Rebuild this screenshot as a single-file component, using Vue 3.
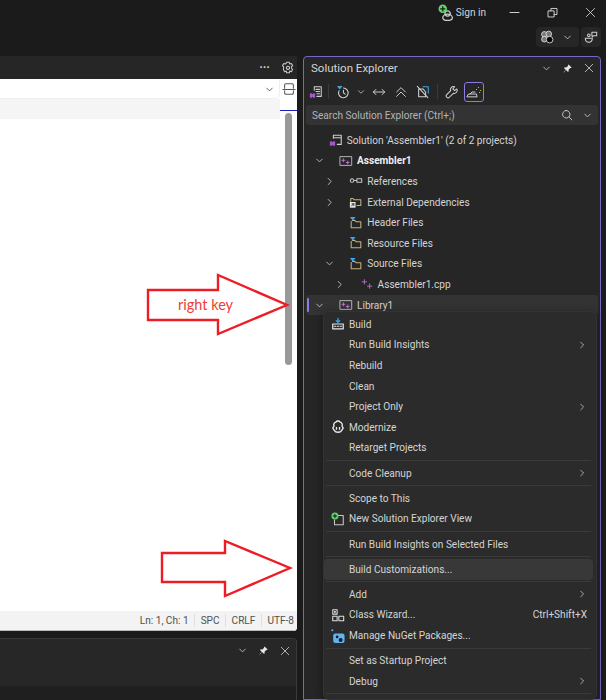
<script setup>
const S = '#d0d0d0'
const line = (d, c = S, w = 1.2) => `<path d="${d}" fill="none" stroke="${c}" stroke-width="${w}" stroke-linecap="round" stroke-linejoin="round"/>`
const fill = (d, c = S) => `<path d="${d}" fill="${c}"/>`
const filterMark = fill('M1 1h6.5L4.2 5z', '#3ea6f0')
const folder = line('M2.5 6v7.5h11V6.5H8L6.5 5H4', '#c8b27c')
const sparks = line('M5 3v5M2.5 5.5h5M11 8v5M8.5 10.5h5', '#b16bc4', 1.1)
const vs = fill('M1 10l1.5-1L4 10.5 5.5 9 7 10v4l-1.5 1L4 13.5 2.5 15 1 14z', '#a855d0')

const icons = {
  down: line('M4 6l4 4 4-4'),
  right: line('M6 3.5l4.5 4.5L6 12.5'),
  close: line('M3 3l10 10M13 3L3 13', S, 1.1),
  min: line('M2.5 8h11', S, 1.3),
  restore: line('M3 6h7v7.5H3zM6 6V3h7.5v7.5H10'),
  pin: fill('M9.5 2L14 6.5l-1 .8-1-.2-2.5 2.6.2 2.3-1 1L6 10.3l-3.4 3.4-.5-.4L5.5 10 3 7.3l1-1 2.4.2L9 4l-.3-1z', '#e8e8e8'),
  user: line('M9 6.5a2.5 2.5 0 1 0 .1 0zM4.5 13c0-2 2-3.5 4.5-3.5s4.5 1.5 4.5 3.5-2 2.5-4.5 2.5-4.5-.5-4.5-2.5z') +
    '<circle cx="4.5" cy="4.5" r="4" fill="#5fd86a"/>' + line('M2.5 4.5h4M4.5 2.5v4', '#1b1b1b', 1.2),
  copilot: '<circle cx="5" cy="5" r="3.2" fill="#777" stroke="#ddd"/><circle cx="10" cy="4.5" r="3.2" fill="#777" stroke="#ddd"/><circle cx="5" cy="10.5" r="3.2" fill="#777" stroke="#ddd"/><circle cx="11" cy="11" r="3.8" fill="#050505" stroke="#ddd"/>',
  feedback: line('M1.5 9.5h8c0 3-1.5 4.5-4 4.5s-4-1.5-4-4.5zM5.5 4.5a1.5 1.5 0 1 0 .01 0zM9 2.5h5.5v4H11L9.5 8V6.5H9z'),
  gear: line('M6.5 1.5h3l.5 2 1.8-.7 1.5 2.5-1.4 1.5.1 1.4 1.3 1.5-1.5 2.5-1.8-.7-.5 2h-3l-.5-2-1.8.7-1.5-2.5L3 8.2V6.8L1.7 5.3l1.5-2.5 1.8.7z', '#c8c8c8') + line('M8 6a1.8 1.8 0 1 0 .01 0z', '#c8c8c8'),
  split: line('M3 7V3.5Q3 2 4.5 2h7Q13 2 13 3.5V7M3 10v2.5Q3 14 4.5 14h7q1.5 0 1.5-1.5V10M1 8.5h14', '#555', 1.2),
  solutionTool: line('M6 6V2h8v11H9M8 5h4M8 7.5h4M9 10h3') + vs,
  history: filterMark + line('M8.5 3.5a5.5 5.5 0 1 1-5 3M8.5 6v3l2 1.5'),
  sync: line('M1.5 8h13M4.5 5l-3 3 3 3M11.5 5l3 3-3 3', S, 1.1),
  collapse: line('M3 8l5-5 5 5M3 13l5-5 5 5', S, 1.1),
  nofiles: line('M3 4.5v9h8V8l-3-3.5z') + line('M8 2h6v7', '#3ea6f0') + line('M1.5 1.5l12 13'),
  wrench: line('M13.5 4.5l-2.5 2-2-2 2-2.5a3.5 3.5 0 0 0-4.5 4.5L2 11a1.8 1.8 0 0 0 3 3l4.5-4.5a3.5 3.5 0 0 0 4-5z'),
  brush: line('M1 12.5l1.5-2.5h8l.5 2.5zM4 10l2-2h3', S, 1) + fill('M12 3h1v1h-1zM14 6h1v1h-1zM10 5h1v1h-1zM13 8h1v1h-1z', '#e0b050'),
  search: line('M7 2a5 5 0 1 0 .01 0zM10.5 10.5L14.5 14.5'),
  solution: line('M5 6V2.5h9V13H9.5M5 5.5h9') + vs,
  project: line('M1.5 3h13v10h-13z', '#b8b8b8', 1.1) + line('M5 5.5v3.5M3.3 7.2h3.4M10 8v3.5M8.3 9.7h3.4', '#c273d8', 1.1),
  references: line('M3.5 5.5a2 2 0 1 0 .01 0zM5.5 7.5h3M9 5.5h5.5v4H9z', '#c8c8c8'),
  external: line('M2 7V4h2.5L6 5.5h7.5V12H9', '#c8b27c') + fill('M1 8h6.5v6.5H1z', '#e8e8e8') + line('M3 12.5L5.5 10M3.5 10h2v2', '#222', 1),
  filter: folder + filterMark,
  cpp: sparks,
  build: line('M2 8h12v5.5H2z', '#e8e8e8', 1.4) + line('M4 10.5h1.5M7.3 10.5h1.5M10.5 10.5H12', '#e8e8e8', 1.2) + line('M8 1.5V6M6 4.2L8 6.2l2-2', '#3ea6f0', 1.4),
  modernize: line('M5.5 2.5a3 3 0 0 1 5 0 3 3 0 0 1 2 4.5l1.5 2-1.5 2.5Q11 14 8 14t-4.5-2.5L2 9l1.5-2a3 3 0 0 1 2-4.5z', '#eee', 1.5) + fill('M5.5 8H7v3H5.5zM9 8h1.5v3H9z', '#eee'),
  newview: line('M6 4h8v10.5H4V9', '#c8c8c8') + '<circle cx="4.5" cy="4.5" r="4" fill="#5fd86a"/>' + line('M2.5 4.5h4M4.5 2.5v4', '#1b1b1b', 1.2),
  wizard: line('M2 2h5v5H2zM2 9.5h5v5H2zM9 9.5h5.5v5H9z', '#e0e0e0', 1.2) + fill('M3.5 3.5h2v2h-2z', '#e0e0e0'),
  nuget: fill('M5 5h8a2.5 2.5 0 0 1 2.5 2.5v6A2.5 2.5 0 0 1 13 16H5a2.5 2.5 0 0 1-2.5-2.5v-6A2.5 2.5 0 0 1 5 5z', '#5fb4f2') + '<circle cx="1.5" cy="1.5" r="1.2" fill="#5fb4f2"/><circle cx="7" cy="9" r="1.5" fill="#1b1b1b"/><circle cx="11" cy="12.5" r="2.3" fill="#1b1b1b"/>',
}

const toolbar = [
  { icon: 'solutionTool', cls: 'first' },
  { sep: true },
  { icon: 'history', cls: 'hist' },
  { icon: 'down', w: 10, cls: 'small' },
  { icon: 'sync' },
  { icon: 'collapse' },
  { icon: 'nofiles' },
  { sep: true },
  { icon: 'wrench' },
  { icon: 'brush', w: 16, cls: 'active' },
]

const tree = [
  { level: 0, icon: 'solution', label: "Solution 'Assembler1' (2 of 2 projects)" },
  { level: 1, icon: 'project', label: 'Assembler1', open: true, bold: true },
  { level: 2, icon: 'references', label: 'References', closed: true },
  { level: 2, icon: 'external', label: 'External Dependencies', closed: true },
  { level: 2, icon: 'filter', label: 'Header Files' },
  { level: 2, icon: 'filter', label: 'Resource Files' },
  { level: 2, icon: 'filter', label: 'Source Files', open: true },
  { level: 3, icon: 'cpp', label: 'Assembler1.cpp', closed: true },
  { level: 1, icon: 'project', label: 'Library1', open: true, selected: true },
]

const menu = [
  { label: 'Build', icon: 'build' },
  { label: 'Run Build Insights', sub: true },
  { label: 'Rebuild' },
  { label: 'Clean' },
  { label: 'Project Only', sub: true },
  { label: 'Modernize', icon: 'modernize' },
  { label: 'Retarget Projects' },
  { sep: true },
  { label: 'Code Cleanup', sub: true },
  { sep: true },
  { label: 'Scope to This' },
  { label: 'New Solution Explorer View', icon: 'newview' },
  { sep: true },
  { label: 'Run Build Insights on Selected Files' },
  { sep: true },
  { label: 'Build Customizations...', hover: true },
  { sep: true },
  { label: 'Add', sub: true },
  { label: 'Class Wizard...', icon: 'wizard', keys: 'Ctrl+Shift+X' },
  { label: 'Manage NuGet Packages...', icon: 'nuget' },
  { sep: true },
  { label: 'Set as Startup Project' },
  { label: 'Debug', sub: true },
  { sep: true },
]

const status = ['Ln: 1, Ch: 1', 'SPC', 'CRLF', 'UTF-8']
</script>

<template>
  <div class="app">
    <header class="titlebar">
      <div class="signin">
        <svg class="ico16" viewBox="0 0 16 16" v-html="icons.user"></svg>
        <span>Sign in</span>
      </div>
      <svg class="win" viewBox="0 0 16 16" v-html="icons.min"></svg>
      <svg class="win" viewBox="0 0 16 16" v-html="icons.restore"></svg>
      <svg class="win" viewBox="0 0 16 16" v-html="icons.close"></svg>
    </header>

    <div class="actions">
      <div class="action-group">
        <svg class="ico14" viewBox="0 0 16 16" v-html="icons.copilot"></svg>
        <svg class="ico11" viewBox="0 0 16 16" v-html="icons.down"></svg>
      </div>
      <div class="action-btn">
        <svg class="ico14" viewBox="0 0 16 16" v-html="icons.feedback"></svg>
      </div>
    </div>

    <main class="workspace">
      <section class="left">
        <div class="tabstrip">
          <span class="dots">···</span>
          <svg class="ico14" viewBox="0 0 16 16" v-html="icons.gear"></svg>
        </div>
        <div class="editor">
          <div class="nav">
            <div class="nav-main">
              <div class="nav-input">
                <svg class="ico11" viewBox="0 0 16 16" v-html="icons.down.replaceAll('#d0d0d0', '#444')"></svg>
              </div>
              <div class="nav-band"></div>
            </div>
            <div class="nav-side">
              <svg class="ico14" viewBox="0 0 16 16" v-html="icons.split"></svg>
              <div class="mark"></div>
            </div>
          </div>
          <div class="code">
            <div class="scrollbar"></div>
          </div>
          <div class="statusbar">
            <span v-for="s in status" :key="s" class="status-item">{{ s }}</span>
          </div>
        </div>
        <div class="output">
          <div class="output-head">
            <svg class="ico11" viewBox="0 0 16 16" v-html="icons.down"></svg>
            <svg class="ico11" viewBox="0 0 16 16" v-html="icons.pin"></svg>
            <svg class="ico12" viewBox="0 0 16 16" v-html="icons.close"></svg>
          </div>
          <div class="output-body"></div>
        </div>
      </section>

      <aside class="explorer">
        <div class="ex-title">
          <span>Solution Explorer</span>
          <div class="ex-controls">
            <svg class="ico11" viewBox="0 0 16 16" v-html="icons.down"></svg>
            <svg class="ico11" viewBox="0 0 16 16" v-html="icons.pin"></svg>
            <svg class="ico12" viewBox="0 0 16 16" v-html="icons.close"></svg>
          </div>
        </div>
        <div class="ex-toolbar">
          <template v-for="(t, i) in toolbar" :key="i">
            <span v-if="t.sep" class="tb-sep"></span>
            <span v-else class="tb-btn" :class="t.cls">
              <svg :width="t.w || 14" :height="t.w || 14" viewBox="0 0 16 16" v-html="icons[t.icon]"></svg>
            </span>
          </template>
        </div>
        <div class="ex-search">
          <span>Search Solution Explorer (Ctrl+;)</span>
          <svg class="ico12 mag" viewBox="0 0 16 16" v-html="icons.search"></svg>
          <svg class="ico11" viewBox="0 0 16 16" v-html="icons.down"></svg>
        </div>
        <ul class="tree">
          <li
            v-for="row in tree"
            :key="row.label"
            class="tree-row"
            :class="{ selected: row.selected, bold: row.bold }"
          >
            <span class="tree-chev" :style="{ marginLeft: (row.level - 1) * 10.3 + 'px' }">
              <svg v-if="row.open || row.closed" class="ico11" viewBox="0 0 16 16" v-html="row.open ? icons.down : icons.right"></svg>
            </span>
            <span class="tree-icon">
              <svg class="ico14" viewBox="0 0 16 16" v-html="icons[row.icon]"></svg>
            </span>
            <span>{{ row.label }}</span>
          </li>
        </ul>
      </aside>
    </main>

    <div class="menu">
      <template v-for="(m, i) in menu" :key="i">
        <div v-if="m.sep" class="menu-sep"></div>
        <div v-else class="menu-item" :class="{ hover: m.hover }">
          <span class="menu-icon">
            <svg v-if="m.icon" class="ico14" viewBox="0 0 16 16" v-html="icons[m.icon]"></svg>
          </span>
          <span class="menu-label">{{ m.label }}</span>
          <span v-if="m.keys" class="menu-keys">{{ m.keys }}</span>
          <svg v-if="m.sub" class="ico10" viewBox="0 0 16 16" v-html="icons.right"></svg>
        </div>
      </template>
    </div>

    <svg class="arrows" viewBox="0 0 606 700">
      <polygon points="148,290 218,290 218,275 287,305 218,334 218,320 148,320" />
      <polygon points="162,553 225,553 225,541 290,568 225,596 225,582 162,582" />
    </svg>
    <span class="arrow-label">right key</span>
  </div>
</template>

<style>
html, body {
  margin: 0;
  background: #1b1b1b;
}
</style>

<style scoped>
.app {
  position: relative;
  width: 606px;
  height: 700px;
  overflow: hidden;
  background: #1b1b1b;
  color: #d4d4d4;
  font-family: Roboto, "Noto Sans", sans-serif;
  font-size: 10.1px;
}
svg { display: block; flex: none; }
.ico16 { width: 17px; height: 17px; }
.ico14 { width: 14px; height: 14px; }
.ico12 { width: 12px; height: 12px; }
.ico11 { width: 11px; height: 11px; }
.ico10 { width: 10px; height: 10px; }

.titlebar {
  height: 24px;
  display: flex;
  align-items: center;
  justify-content: flex-end;
  padding-right: 9px;
}
.signin {
  display: flex;
  align-items: center;
  margin-right: 22px;
}
.signin span { margin-left: 1px; }
.win {
  width: 13px;
  height: 13px;
  margin-left: 25px;
}
.signin + .win { margin-left: 0; }

.actions {
  height: 32px;
  display: flex;
  justify-content: flex-end;
  align-items: flex-start;
  gap: 2px;
  padding: 3px 5px 0 0;
  box-sizing: border-box;
}
.action-group, .action-btn {
  height: 20px;
  background: #262626;
  border-radius: 4px;
  display: flex;
  align-items: center;
}
.action-group {
  width: 43px;
  padding-left: 4px;
  gap: 8px;
  box-sizing: border-box;
}
.action-btn {
  width: 20px;
  justify-content: center;
}

.workspace {
  height: 644px;
  display: flex;
}
.left {
  width: 297px;
  display: flex;
  flex-direction: column;
  flex: none;
}
.tabstrip {
  height: 23px;
  background: #262626;
  display: flex;
  justify-content: flex-end;
  align-items: center;
  gap: 11px;
  padding-right: 2px;
}
.dots { color: #d0d0d0; font-weight: 700; font-size: 12px; }
.editor {
  height: 552px;
  background: #fff;
  border-radius: 0 0 4px 0;
  display: flex;
  flex-direction: column;
  overflow: hidden;
}
.nav { display: flex; height: 34px; flex: none; }
.nav-main { width: 280px; }
.nav-input {
  height: 18px;
  margin-top: 1px;
  border-radius: 0 0 4px 0;
  box-shadow: 0 1px 0 #efefef, 1px 0 0 #efefef;
  display: flex;
  align-items: center;
  justify-content: flex-end;
  padding-right: 4px;
  width: 279px;
  box-sizing: border-box;
}
.nav-band {
  height: 20px;
  margin-top: 1px;
  background: #f5f5f5;
}
.nav-side {
  width: 17px;
  display: flex;
  flex-direction: column;
  align-items: center;
  padding-top: 3px;
  box-sizing: border-box;
}
.mark {
  width: 17px;
  height: 1px;
  margin-top: 14px;
  background: #2222bb;
}
.code {
  flex: 1;
  display: flex;
  justify-content: flex-end;
  padding-right: 5px;
}
.scrollbar {
  width: 7px;
  height: 252px;
  background: #999;
  border-radius: 4px;
}
.statusbar {
  height: 20px;
  flex: none;
  background: #f3f3f3;
  border-bottom: 1px solid #bbb;
  box-sizing: border-box;
  display: flex;
  justify-content: flex-end;
  align-items: center;
  color: #505050;
  padding-right: 3px;
}
.status-item {
  padding: 0 5.5px;
  border-left: 1px solid #e0e0e0;
  line-height: 13px;
}
.status-item:first-child { border-left: 0; }
.status-item:last-child { padding-right: 0; }
.output {
  margin-top: 7px;
  flex: 1;
  background: #1f1f1f;
  border: 1px solid #3a3a3a;
  border-width: 1px 1px 0 0;
  border-radius: 0 4px 0 0;
  display: flex;
  flex-direction: column;
  overflow: hidden;
}
.output-head {
  height: 47px;
  flex: none;
  background: #272727;
  display: flex;
  justify-content: flex-end;
  gap: 10px;
  padding: 6px 5px 0 0;
  box-sizing: border-box;
}
.output-body { flex: 1; }

.explorer {
  width: 298px;
  margin-left: 6px;
  flex: none;
  background: #262626;
  border: 1.5px solid #7568c4;
  border-radius: 4px 4px 0 0;
  box-sizing: border-box;
  padding: 0 2px;
}
.ex-title {
  height: 22px;
  display: flex;
  align-items: center;
  justify-content: space-between;
  padding: 0 3px 0 5px;
  font-size: 11.5px;
}
.ex-controls {
  display: flex;
  align-items: center;
  gap: 10px;
}
.ex-toolbar {
  height: 25px;
  display: flex;
  align-items: center;
}
.tb-btn {
  width: 22px;
  height: 20px;
  display: flex;
  align-items: center;
  justify-content: center;
  box-sizing: border-box;
}
.tb-btn.first { width: 19px; }
.tb-btn.hist { width: 21px; }
.tb-btn.small { width: 15px; }
.tb-btn.active {
  width: 20px;
  border: 1.5px solid #8a7ce0;
  border-radius: 3px;
  margin-left: 1px;
}
.tb-sep {
  width: 1px;
  height: 15px;
  background: #3c3c3c;
  margin: 0 3px;
}
.ex-search {
  height: 20px;
  margin-top: 1px;
  background: #333;
  border-radius: 3px;
  display: flex;
  align-items: center;
  padding: 0 5px 0 6px;
  color: #b4b4b4;
}
.ex-search span { flex: 1; }
.mag { margin-right: 9px; }
.tree {
  list-style: none;
  margin: 5px 0 0;
  padding: 0;
}
.tree-row {
  height: 20.6px;
  display: flex;
  align-items: center;
  white-space: nowrap;
  border-radius: 3px;
  position: relative;
  padding-left: 4px;
  box-sizing: border-box;
}
.tree-row.bold { font-weight: 700; color: #efefef; }
.tree-row.selected { background: #333; }
.tree-row.selected::before {
  content: '';
  position: absolute;
  left: 1px;
  top: 3px;
  width: 2px;
  height: 14px;
  border-radius: 1px;
  background: #8a7ce0;
}
.tree-chev {
  width: 18px;
  display: flex;
  justify-content: center;
  flex: none;
}
.tree-icon {
  width: 29px;
  padding-right: 4px;
  box-sizing: border-box;
  display: flex;
  justify-content: flex-end;
  flex: none;
}

.menu {
  position: absolute;
  left: 323px;
  top: 311px;
  width: 274px;
  background: #2b2b2b;
  border: 1px solid #333;
  border-radius: 6px;
  box-sizing: border-box;
  padding: 2px 3px 3px 0;
  box-shadow: 0 2px 8px rgba(0, 0, 0, 0.4);
}
.menu-item {
  height: 20.6px;
  display: flex;
  align-items: center;
  border-radius: 4px;
  padding-right: 6px;
}
.menu-item.hover { background: #383838; }
.menu-icon {
  width: 25px;
  padding-left: 7px;
  box-sizing: border-box;
  flex: none;
}
.menu-label { flex: 1; white-space: nowrap; }
.menu-sep {
  height: 1px;
  background: #3a3a3a;
  margin: 1.8px 2px;
}
.arrows {
  position: absolute;
  left: 0;
  top: 0;
  width: 606px;
  height: 700px;
  pointer-events: none;
}
.arrows polygon {
  fill: #fff;
  stroke: #ee1c25;
  stroke-width: 2.4;
}
.arrow-label {
  position: absolute;
  left: 178px;
  top: 295px;
  color: #ee3b3b;
  font-family: Lato, sans-serif;
  font-size: 14.5px;
  line-height: 20px;
}
</style>
